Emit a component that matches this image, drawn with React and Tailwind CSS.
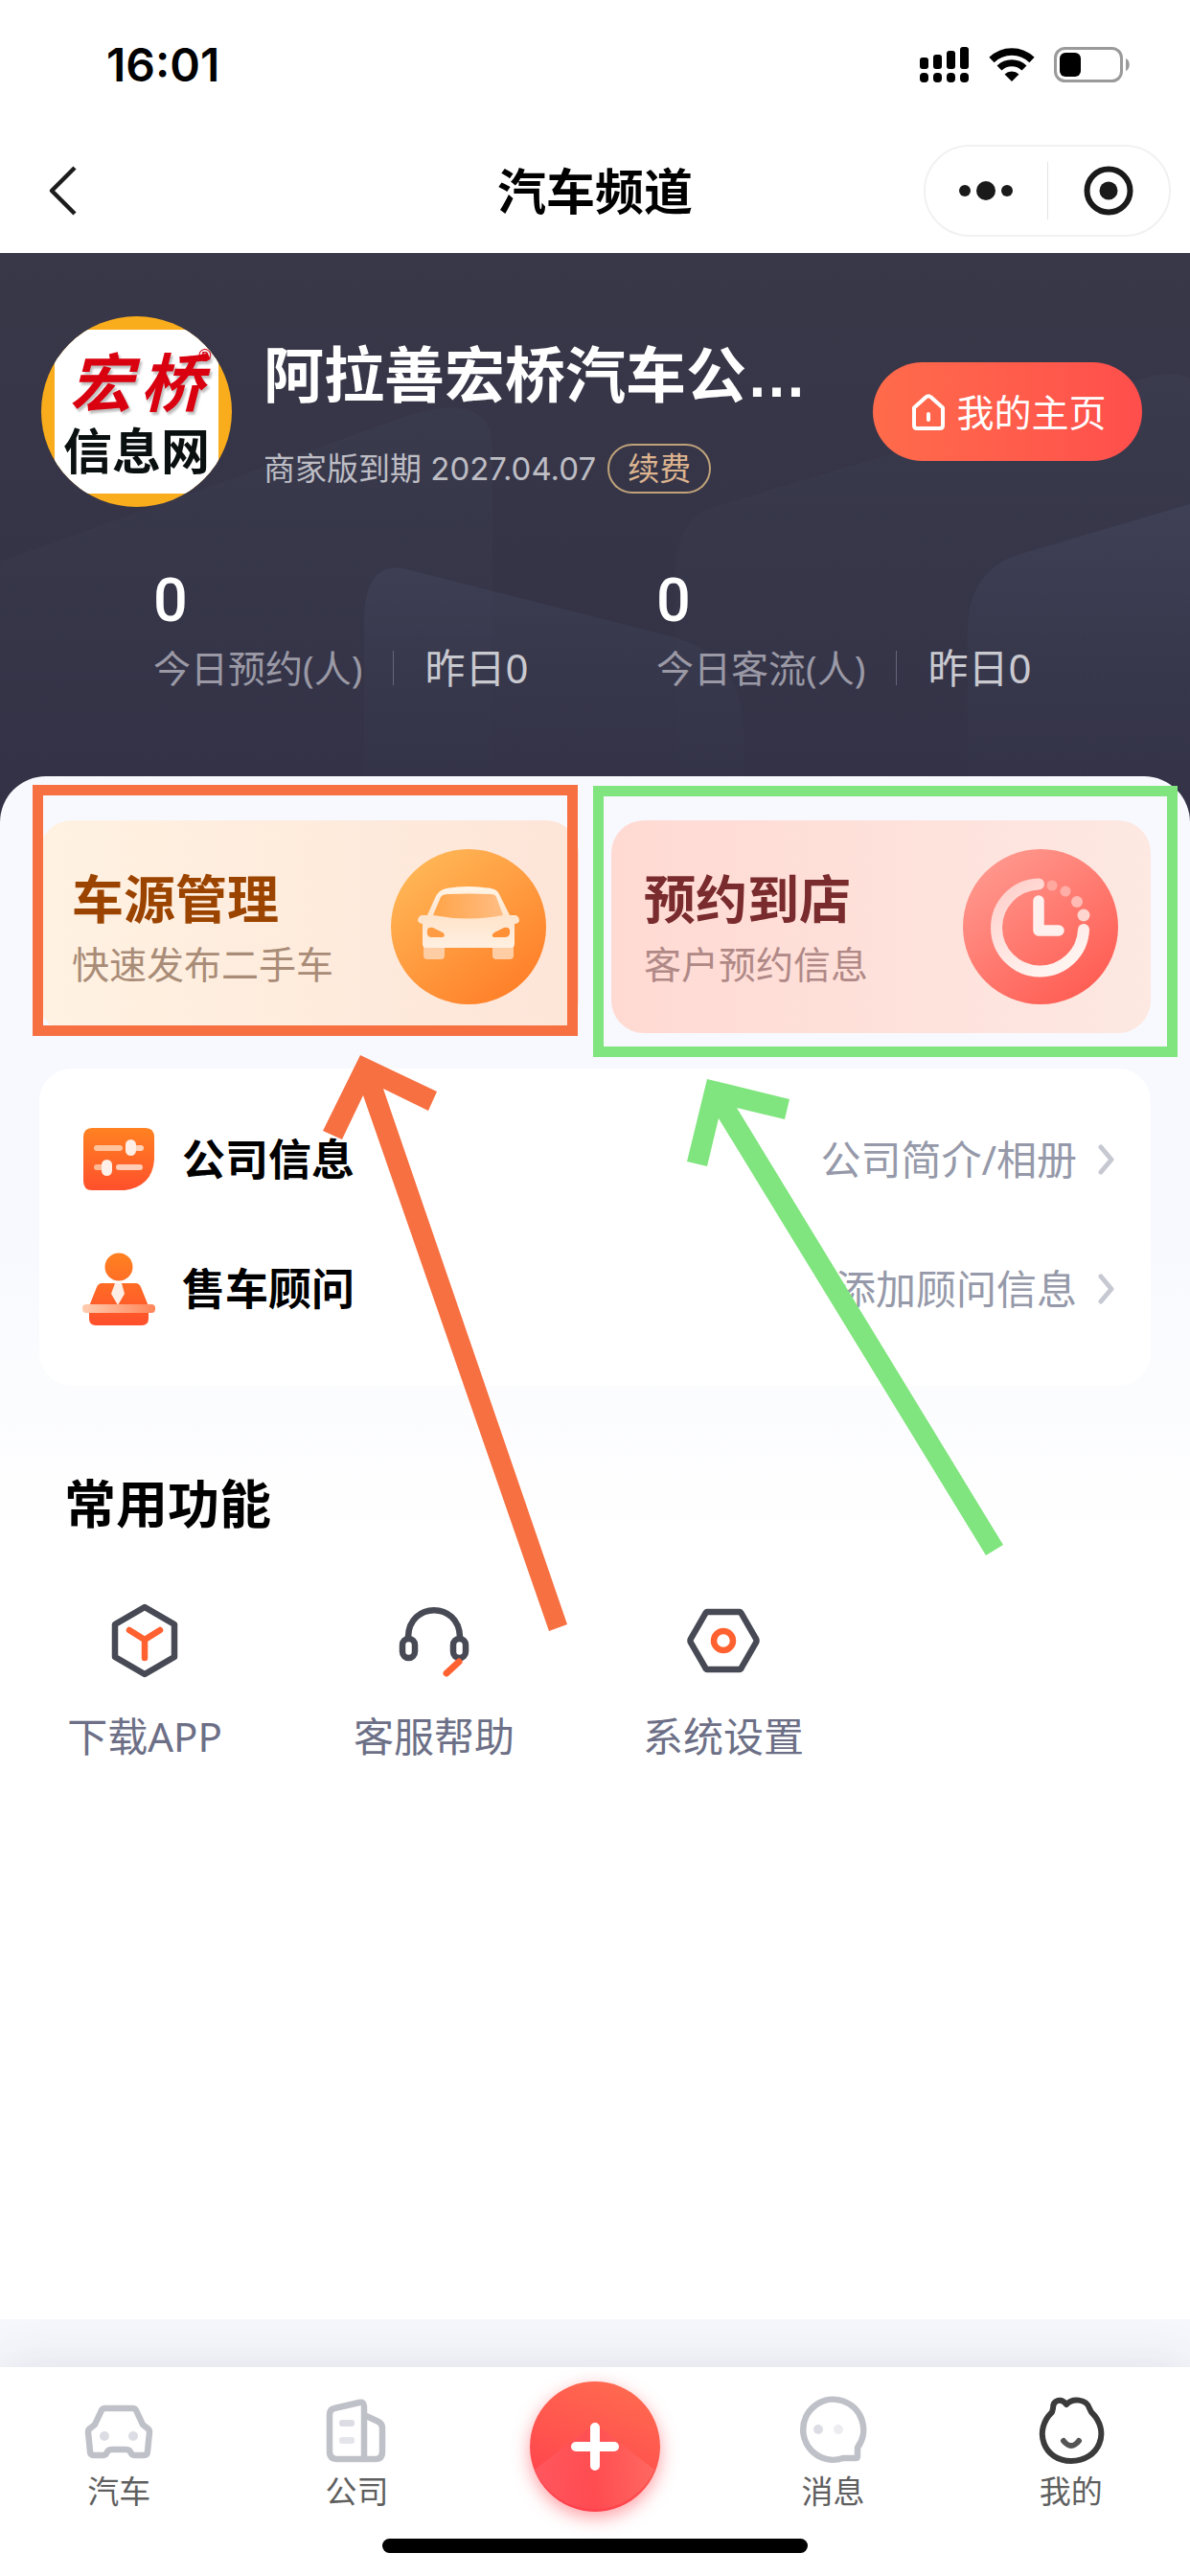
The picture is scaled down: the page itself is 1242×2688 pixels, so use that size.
import React, { useState } from 'react';
import clsx from 'clsx';

const CJK = "font-['Noto_Sans','Noto_Sans_CJK_SC',sans-serif]";

function SignalIcon() {
  return (
    <svg width="52" height="38" viewBox="0 0 52 38" fill="#000">
      <rect x="0" y="11" width="9" height="12" rx="3" />
      <rect x="14" y="8" width="9" height="15" rx="3" />
      <rect x="28" y="4" width="9" height="19" rx="3" />
      <rect x="42" y="0" width="9" height="23" rx="3" />
      <rect x="0" y="27" width="9" height="10" rx="4" />
      <rect x="14" y="27" width="9" height="10" rx="4" />
      <rect x="28" y="27" width="9" height="10" rx="4" />
      <rect x="42" y="27" width="9" height="10" rx="4" />
    </svg>
  );
}

function WifiIcon() {
  return (
    <svg width="48" height="36" viewBox="0 0 48 36">
      <path d="M3 12.5a30 30 0 0 1 42 0" fill="none" stroke="#000" strokeWidth="7.5" />
      <path d="M11 21a18.500 18.500 0 0 1 26 0" fill="none" stroke="#000" strokeWidth="7" />
      <path d="M24 35l-7.500-7.500a11 11 0 0 1 15 0z" fill="#000" />
    </svg>
  );
}

function BatteryIcon() {
  return (
    <svg width="80" height="38" viewBox="0 0 80 38">
      <rect x="1.500" y="1.500" width="69" height="34" rx="10" fill="none" stroke="#9a9a9a" strokeWidth="3" />
      <rect x="6" y="6" width="22" height="25" rx="6" fill="#000" />
      <path d="M75 12c5 2 5 11 0 13z" fill="#9a9a9a" />
    </svg>
  );
}

function StatusBar() {
  return (
    <div className="flex h-[134px] items-center justify-between pt-[2px] pl-[111px] pr-[62px]">
      <span className="font-['Inter',sans-serif] text-[48px] leading-[60px] font-semibold text-black">16:01</span>
      <div className="flex items-center gap-5">
        <SignalIcon />
        <WifiIcon />
        <BatteryIcon />
      </div>
    </div>
  );
}

function TitleBar() {
  return (
    <div className="grid h-[130px] grid-cols-[1fr_auto_1fr] items-center px-5">
      <button aria-label="返回" className="justify-self-start pl-[30px]">
        <svg width="32" height="52" viewBox="0 0 32 52" fill="none" stroke="#1c1c1c" strokeWidth="4.500" strokeLinejoin="round">
          <path d="M28 2L4 26l24 24" />
        </svg>
      </button>
      <h1 className="text-[51px] leading-[64px] font-bold text-black">汽车频道</h1>
      <div className="flex h-24 w-[258px] items-center justify-self-end rounded-full border-2 border-[#f1f1f1]">
        <button aria-label="更多" className="flex flex-1 justify-center">
          <svg width="56" height="20" viewBox="0 0 56 20" fill="#1a1a1a">
            <circle cx="6" cy="10" r="6" />
            <circle cx="28" cy="10" r="10" />
            <circle cx="50" cy="10" r="6" />
          </svg>
        </button>
        <span className="h-[60px] w-px bg-[#e3e3e3]" />
        <button aria-label="关闭" className="flex flex-1 justify-center">
          <svg width="52" height="52" viewBox="0 0 52 52">
            <circle cx="26" cy="26" r="22.500" fill="none" stroke="#1a1a1a" strokeWidth="6" />
            <circle cx="26" cy="26" r="9.500" fill="#1a1a1a" />
          </svg>
        </button>
      </div>
    </div>
  );
}

function HeaderBackdrop() {
  return (
    <svg className="absolute inset-0 h-full w-full" viewBox="0 0 1242 596" preserveAspectRatio="none">
      <defs>
        <linearGradient id="tile" x1="0" y1="0" x2="0" y2="1">
          <stop offset="0" stopColor="#4a5068" stopOpacity="0.4" />
          <stop offset="1" stopColor="#3c3d56" stopOpacity="0.05" />
        </linearGradient>
      </defs>
      <path d="M0 322L425 170Q514 142 514 205V596H0z" fill="url(#tile)" opacity="0.4" />
      <path d="M705 596V330Q705 280 745 265L1180 135Q1225 120 1242 131V596z" fill="url(#tile)" opacity="0.4" />
      <path d="M380 596V380Q382 315 432 332L700 400Q776 420 776 500V596z" fill="url(#tile)" opacity="0.8" />
      <path d="M1010 596V390Q1012 332 1062 315L1242 262V596z" fill="url(#tile)" opacity="0.9" />
    </svg>
  );
}

function Avatar() {
  return (
    <div className="flex size-[199px] shrink-0 items-center justify-center overflow-hidden rounded-full bg-[#f9ac1c]">
      <div className="flex size-[171px] flex-col items-center justify-center bg-white">
        <div className="relative flex gap-2 text-[66px] leading-[80px] font-bold text-[#d9000f] italic drop-shadow-[2px_3px_1px_rgba(0,0,0,0.25)]">
          <span>宏</span>
          <span>桥</span>
          <span className="absolute -right-2 top-1 font-['Liberation_Sans',sans-serif] text-[18px] leading-none font-bold not-italic">®</span>
        </div>
        <div className="text-[51px] leading-[64px] font-bold text-[#0a0f0f]">信息网</div>
      </div>
    </div>
  );
}

const stats = [
  { label: '今日预约(人)', value: 0, yesterday: '昨日0' },
  { label: '今日客流(人)', value: 0, yesterday: '昨日0' },
];

function ShopHeader() {
  return (
    <header className="relative bg-linear-to-b from-[#393849] to-[#323145] pt-[66px] pb-[139px]">
      <HeaderBackdrop />
      <div className="relative flex items-center pl-[43px] pr-[50px]">
        <Avatar />
        <div className="ml-[33px] min-w-0 flex-1 self-start pt-[26px]">
          <h2 className="truncate font-['Liberation_Sans','Noto_Sans_CJK_SC',sans-serif] text-[63px] leading-[72px] font-bold text-white">
            阿拉善宏桥汽车公…
          </h2>
          <div className="mt-[35px] flex items-center gap-3">
            <span className="font-['Inter','Noto_Sans_CJK_SC',sans-serif] text-[33px] leading-[52px] whitespace-nowrap text-[#bdbdc4]">
              商家版到期 2027.04.07
            </span>
            <button className="h-[52px] w-[108px] rounded-full border-2 border-[#bfa27a] text-[33px] leading-[46px] text-[#ddb48f]">
              续费
            </button>
          </div>
        </div>
        <button className="flex h-[103px] w-[281px] items-center justify-center gap-3 rounded-full bg-linear-to-r from-[#ff6b4b] to-[#ff4e4c] pl-1 text-[39px] leading-[48px] text-white">
          <svg width="34" height="38" viewBox="0 0 34 38" fill="none" stroke="#fff" strokeWidth="4" strokeLinecap="round" strokeLinejoin="round">
            <path d="M2 14.500L14.500 3.200q2.500-2 5 0L32 14.500V33q0 3-3 3H5q-3 0-3-3z" />
            <path d="M17 21v6" />
          </svg>
          我的主页
        </button>
      </div>
      <div className="relative mt-[66px] grid grid-cols-2 px-24">
        {stats.map((s) => (
          <div key={s.label} className="pl-16">
            <div className="font-['Roboto',sans-serif] text-[63px] leading-[64px] font-medium text-white">{s.value}</div>
            <div className="mt-[14px] flex items-center leading-[48px]">
              <span className="text-[39px] text-[#9a99a5]">{s.label}</span>
              <span className="mx-8 h-9 w-px bg-[#66657a]" />
              <span className="text-[42px] text-[#c9c9d0]">{s.yesterday}</span>
            </div>
          </div>
        ))}
      </div>
    </header>
  );
}

function CarBadge() {
  return (
    <svg width="162" height="162" viewBox="0 0 162 162" className="shrink-0">
      <defs>
        <linearGradient id="carBg" x1="0.200" y1="0.100" x2="0.800" y2="0.900">
          <stop offset="0" stopColor="#ffb454" />
          <stop offset="1" stopColor="#ff812a" />
        </linearGradient>
        <linearGradient id="carBody" x1="0" y1="0" x2="0" y2="1">
          <stop offset="0" stopColor="#fff5e8" />
          <stop offset="0.500" stopColor="#ffe4cb" />
          <stop offset="1" stopColor="#fff0e2" />
        </linearGradient>
        <linearGradient id="carGlass" x1="0" y1="0" x2="1" y2="0">
          <stop offset="0" stopColor="#ffa448" />
          <stop offset="1" stopColor="#ffbd83" />
        </linearGradient>
      </defs>
      <circle cx="81" cy="81" r="81" fill="url(#carBg)" />
      <rect x="34" y="98" width="22" height="17" rx="4" fill="#ffcda3" />
      <rect x="106" y="98" width="22" height="17" rx="4" fill="#ffcda3" />
      <path d="M50 45Q53 42 58 41Q81 37 104 41Q111 42 113 47L124 69H130Q134 70 134 75Q133 78 129 78V99Q129 103 125 103H37Q33 103 33 99V78Q28 77 28 74Q29 69 33 69H38L46 51Q48 47 50 45z" fill="url(#carBody)" />
      <path d="M52 50Q54 47 60 47Q81 46 104 47Q109 47 110 50L117 69Q81 76 44 69z" fill="url(#carGlass)" />
      <path d="M38 84Q39 81 44 82L54 87Q58 90 54 92H42Q37 92 38 84z" fill="#ff9c43" />
      <path d="M124 84Q123 81 118 82L108 87Q104 90 107 92H119Q125 92 124 84z" fill="#ff9036" />
    </svg>
  );
}

function ClockBadge() {
  return (
    <svg width="162" height="162" viewBox="0 0 162 162" className="shrink-0">
      <defs>
        <linearGradient id="clockBg" x1="0.200" y1="0.100" x2="0.800" y2="0.900">
          <stop offset="0" stopColor="#ff958b" />
          <stop offset="1" stopColor="#ff5f55" />
        </linearGradient>
        <linearGradient id="clockRing" x1="0" y1="0" x2="0.600" y2="1">
          <stop offset="0" stopColor="#ffcfca" />
          <stop offset="1" stopColor="#fff3f0" />
        </linearGradient>
      </defs>
      <circle cx="81" cy="81" r="81" fill="url(#clockBg)" />
      <path d="M79 36.500A45.500 45.500 0 1 0 126 84" fill="none" stroke="url(#clockRing)" strokeWidth="12" strokeLinecap="round" />
      <path d="M79 54V85H100" fill="none" stroke="#fff0ee" strokeWidth="11.500" strokeLinecap="round" strokeLinejoin="round" />
      <circle cx="93" cy="38" r="5.500" fill="#ffa8a0" />
      <circle cx="107" cy="44" r="5.500" fill="#ffaea7" />
      <circle cx="119" cy="55" r="6" fill="#ffbbb4" />
      <circle cx="126" cy="69" r="6.500" fill="#ffd5d0" />
    </svg>
  );
}

function OrangeArrow() {
  return (
    <svg className="pointer-events-none absolute left-[296px] top-[245px] z-10" width="256" height="601" viewBox="337 1101 256 601">
      <polygon fill="#f77041" points="376,1101 456,1139 447,1159 400,1136 592,1695 573,1702 379,1143 357,1189 337,1180" />
    </svg>
  );
}

function GreenArrow() {
  return (
    <svg className="pointer-events-none absolute left-[79px] top-[270px] z-10" width="331" height="499" viewBox="717 1126 331 499">
      <polygon fill="#80e57e" points="738,1126 824,1147 819,1168 769,1156 1047,1612 1029,1623 750,1167 738,1217 717,1212" />
    </svg>
  );
}

function EntryCards() {
  return (
    <div className="grid grid-cols-2 gap-[34px]">
      <div className="relative">
        <button className="flex h-[222px] w-full items-center justify-between rounded-[34px] bg-linear-to-r from-[#fff2e2] to-[#fde5d8] px-[34px] text-left">
          <span className="pt-1">
            <span className="block text-[54px] leading-[60px] font-bold text-[#9b4400]">车源管理</span>
            <span className="mt-[14px] block text-[39px] leading-[48px] text-[#a98c77]">快速发布二手车</span>
          </span>
          <CarBadge />
        </button>
        <div className="pointer-events-none absolute -left-[7px] right-px -top-[37px] -bottom-[3px] z-10 border-[11px] border-[#f77041]" />
        <OrangeArrow />
      </div>
      <div className="relative">
        <button className="flex h-[222px] w-full items-center justify-between rounded-[34px] bg-linear-to-r from-[#ffdad3] to-[#fde8e2] px-[34px] text-left">
          <span className="pt-1">
            <span className="block text-[54px] leading-[60px] font-bold text-[#792b2d]">预约到店</span>
            <span className="mt-[14px] block text-[39px] leading-[48px] text-[#b08987]">客户预约信息</span>
          </span>
          <ClockBadge />
        </button>
        <div className="pointer-events-none absolute -left-[19px] -right-[28px] -top-[36px] -bottom-[25px] z-10 border-[11px] border-[#80e57e]" />
        <GreenArrow />
      </div>
    </div>
  );
}

function CompanyIcon() {
  return (
    <svg width="76" height="80" viewBox="0 0 76 80">
      <defs>
        <linearGradient id="orangeRed" x1="0" y1="0" x2="0" y2="1">
          <stop offset="0" stopColor="#ff8221" />
          <stop offset="1" stopColor="#ff502c" />
        </linearGradient>
      </defs>
      <path d="M10 7H66Q75 7 75 17V40Q73 68 44 72H10Q1 72 1 62V17Q1 7 10 7z" fill="url(#orangeRed)" />
      <rect x="12" y="25" width="30" height="6" rx="3" fill="#ffc49d" />
      <rect x="54" y="25" width="10" height="6" rx="3" fill="#ffd3b8" />
      <rect x="45" y="19" width="11" height="17" rx="5.500" fill="#ffefe4" />
      <rect x="12" y="45" width="11" height="6" rx="3" fill="#ffb894" />
      <rect x="35" y="45" width="28" height="6" rx="3" fill="#ffcdb5" />
      <rect x="20" y="40" width="11" height="17" rx="5.500" fill="#fff1e9" />
    </svg>
  );
}

function AdvisorIcon() {
  return (
    <svg width="76" height="80" viewBox="0 0 76 80">
      <defs>
        <linearGradient id="advisor" gradientUnits="userSpaceOnUse" x1="0" y1="2" x2="0" y2="78">
          <stop offset="0" stopColor="#ff8221" />
          <stop offset="1" stopColor="#ff4f2c" />
        </linearGradient>
        <linearGradient id="desk" x1="0" y1="0" x2="1" y2="0">
          <stop offset="0" stopColor="#ffcdb0" />
          <stop offset="1" stopColor="#ff8458" />
        </linearGradient>
      </defs>
      <circle cx="38" cy="17" r="14.500" fill="url(#advisor)" />
      <path d="M20 34H56Q59 34 61 38L69 58V71Q69 78 62 78H14Q7 78 7 71V58L15 38Q17 34 20 34z" fill="url(#advisor)" />
      <path d="M34 34H41L44 45L37 57L30 45z" fill="#ffeee5" />
      <rect x="0" y="56" width="76" height="9" rx="4" fill="url(#desk)" />
    </svg>
  );
}

const menuRows = [
  { title: '公司信息', hint: '公司简介/相册', icon: <CompanyIcon /> },
  { title: '售车顾问', hint: '添加顾问信息', icon: <AdvisorIcon /> },
];

function MenuList() {
  return (
    <div className="mt-[37px] rounded-[34px] bg-white pt-[27px] pb-[34px] pl-[45px] pr-[38px]">
      {menuRows.map((row) => (
        <button key={row.title} className="flex h-[135px] w-full items-center">
          {row.icon}
          <span className="ml-7 text-[45px] leading-[56px] font-bold text-black">{row.title}</span>
          <span className="ml-auto text-[42px] leading-[52px] text-[#9599a9]">{row.hint}</span>
          <svg className="ml-[22px]" width="17" height="32" viewBox="0 0 17 32" fill="none" stroke="#c6c8d2" strokeWidth="5" strokeLinecap="round" strokeLinejoin="round">
            <path d="M3 3L14 16L3 29" />
          </svg>
        </button>
      ))}
    </div>
  );
}

function BoxIcon() {
  return (
    <svg width="80" height="80" viewBox="0 0 80 80" fill="none" strokeLinecap="round" strokeLinejoin="round">
      <path d="M40 5L71 23V57L40 75L9 57V23z" stroke="#474a54" strokeWidth="6.500" />
      <path d="M24 29L40 39L56 29M40 39V58" stroke="#ff6130" strokeWidth="6.500" />
    </svg>
  );
}

function HeadsetIcon() {
  return (
    <svg width="80" height="80" viewBox="0 0 80 80" fill="none" strokeLinecap="round">
      <path d="M13 36C14 -1 66 -1 67 36" stroke="#474a54" strokeWidth="6.500" />
      <rect x="7" y="38" width="13" height="20" rx="6.500" stroke="#474a54" strokeWidth="6.500" />
      <rect x="60" y="38" width="13" height="20" rx="6.500" stroke="#474a54" strokeWidth="6.500" />
      <path d="M66 62L53 74" stroke="#ff6130" strokeWidth="7" />
    </svg>
  );
}

function SettingsIcon() {
  return (
    <svg width="80" height="80" viewBox="0 0 80 80" fill="none" strokeLinejoin="round">
      <path d="M23 10H57Q58 10 59 12L74 38Q75 40 74 42L59 68Q58 70 57 70H23Q22 70 21 68L6 42Q5 40 6 38L21 12Q22 10 23 10z" stroke="#474a54" strokeWidth="6.500" />
      <circle cx="40" cy="40" r="10" stroke="#ff6130" strokeWidth="6.500" />
    </svg>
  );
}

const tools = [
  { label: '下载APP', icon: <BoxIcon /> },
  { label: '客服帮助', icon: <HeadsetIcon /> },
  { label: '系统设置', icon: <SettingsIcon /> },
];

function CommonTools() {
  return (
    <section className="mt-[91px]">
      <h3 className="pl-[67px] text-[54px] leading-[64px] font-bold text-black">常用功能</h3>
      <div className="mt-[71px] grid grid-cols-4 pr-[34px]">
        {tools.map((t) => (
          <button key={t.label} className="flex flex-col items-center gap-9">
            {t.icon}
            <span className="text-[42px] leading-[48px] text-[#6c6f86]">{t.label}</span>
          </button>
        ))}
      </div>
    </section>
  );
}

function TabCar() {
  return (
    <svg width="72" height="72" viewBox="0 0 72 72" fill="none" strokeLinejoin="round">
      <path d="M22 13H50Q53 13 54 15L61 30L66 34Q68 35 68 38L66 58Q66 62 62 62H53Q50 62 49 60L47 57Q46 56 43 56H29Q26 56 25 57L23 60Q22 62 19 62H10Q6 62 6 58L4 38Q4 35 6 34L11 30L18 15Q19 13 22 13z" stroke="#bfc1c8" strokeWidth="6.500" />
      <circle cx="21" cy="42" r="5" fill="#dcdde4" />
      <circle cx="51" cy="42" r="5" fill="#dcdde4" />
    </svg>
  );
}

function TabCompany() {
  return (
    <svg width="72" height="72" viewBox="0 0 72 72" fill="none" strokeLinejoin="round">
      <path d="M7 20Q7 14 12 13L38 7Q43 6 43 11V66H15Q7 66 7 58z" stroke="#bfc1c8" strokeWidth="6.500" />
      <path d="M43 20L58 27Q62 29 62 34V58Q62 66 55 66H43" stroke="#bfc1c8" strokeWidth="6.500" />
      <rect x="17" y="25" width="16" height="7" rx="3" fill="#dcdde4" />
      <rect x="17" y="43" width="16" height="7" rx="3" fill="#e4e5ea" />
    </svg>
  );
}

function TabMessage() {
  return (
    <svg width="72" height="72" viewBox="0 0 72 72" fill="none" strokeLinejoin="round">
      <path d="M47 65A31.500 31.500 0 1 1 62 54V63Q62 65 60 65z" stroke="#bfc1c8" strokeWidth="6.500" />
      <circle cx="21" cy="35" r="5" fill="#dcdde4" />
      <circle cx="42" cy="35" r="5" fill="#ececf1" />
    </svg>
  );
}

function TabMine() {
  return (
    <svg width="72" height="72" viewBox="0 0 72 72" fill="none" strokeLinejoin="round" strokeLinecap="round">
      <path d="M17 13C17 4 26 2 31 9C37 2 52 3 55 13L57 17C78 37 65 68 36 68C7 68 -4 36 16 17z" stroke="#3b3b3b" strokeWidth="6" />
      <path d="M28 47Q36 57 44 47" stroke="#555" strokeWidth="6" />
    </svg>
  );
}

const tabs = [
  { key: 'car', label: '汽车', icon: <TabCar /> },
  { key: 'company', label: '公司', icon: <TabCompany /> },
  { key: 'add' },
  { key: 'message', label: '消息', icon: <TabMessage /> },
  { key: 'mine', label: '我的', icon: <TabMine /> },
];

function AddButton() {
  return (
    <button aria-label="发布" className="justify-self-center self-start rounded-full shadow-[0_6px_18px_rgba(255,70,80,0.5)]">
      <svg width="136" height="136" viewBox="0 0 136 136" className="block">
        <defs>
          <linearGradient id="addBg" x1="0.700" y1="0" x2="0.300" y2="1">
            <stop offset="0" stopColor="#ff6a50" />
            <stop offset="1" stopColor="#ff3f4c" />
          </linearGradient>
          <linearGradient id="addFold" x1="0" y1="0" x2="1" y2="0">
            <stop offset="0" stopColor="#ff5a62" />
            <stop offset="0.500" stopColor="#ff4d52" />
            <stop offset="1" stopColor="#ff6d66" />
          </linearGradient>
        </defs>
        <circle cx="68" cy="68" r="68" fill="url(#addBg)" />
        <path d="M5 92L68 44L130 92A68 68 0 0 1 5 92z" fill="url(#addFold)" opacity="0.800" />
        <path d="M68 48V88M48 68H88" stroke="#fff" strokeWidth="10" strokeLinecap="round" />
      </svg>
    </button>
  );
}

function TabBar() {
  const [active, setActive] = useState('mine');

  return (
    <footer className="mt-[50px] bg-white pb-6 shadow-[0_0_50px_rgba(60,60,90,0.12)]">
      <nav className="grid grid-cols-5 pt-[15px]">
        {tabs.map((tab) =>
          tab.key === 'add' ? (
            <AddButton key={tab.key} />
          ) : (
            <button
              key={tab.key}
              onClick={() => setActive(tab.key)}
              aria-current={active === tab.key ? 'page' : undefined}
              className="flex flex-col items-center gap-2 pt-[15px]"
            >
              {tab.icon}
              <span className="text-[33px] leading-[40px] text-[#5f5f5f]">{tab.label}</span>
            </button>
          )
        )}
      </nav>
      <div className="mx-auto mt-7 h-[15px] w-[444px] rounded-full bg-black" />
    </footer>
  );
}

export default function App() {
  return (
    <div className={clsx('flex min-h-screen flex-col bg-[#f6f7fc]', CJK)}>
      <div className="bg-white">
        <StatusBar />
        <TitleBar />
      </div>
      <ShopHeader />
      <main className="relative -mt-[50px] flex-1 rounded-t-[48px] bg-[linear-gradient(#f8f9fe_0px,#f8f9fe_480px,#ffffff_800px)] pt-[46px]">
        <div className="px-[41px]">
          <EntryCards />
          <MenuList />
        </div>
        <CommonTools />
      </main>
      <TabBar />
    </div>
  );
}
